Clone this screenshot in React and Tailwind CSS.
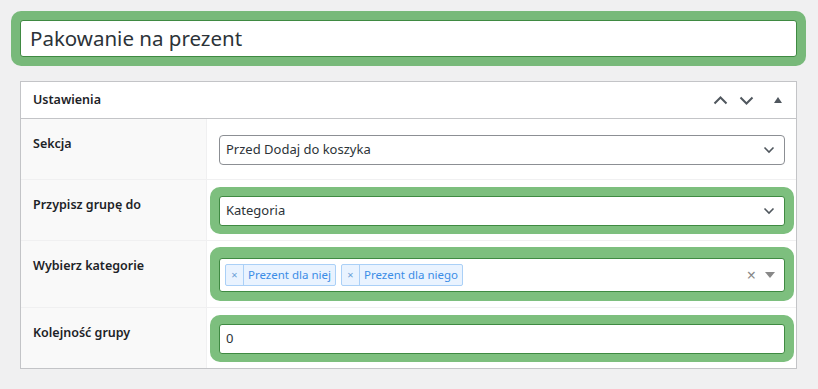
import React from "react";

const font = { fontFamily: '"Noto Sans", "Open Sans", sans-serif' };

function Chevron({ className = "" }) {
  return (
    <svg width="12" height="8" viewBox="0 0 12 8" className={className}>
      <path d="M1.5 1.5 L6 6 L10.5 1.5" fill="none" stroke="#50575e" strokeWidth="1.6" />
    </svg>
  );
}

function Row({ label, children, last, tall }) {
  return (
    <div className={`flex ${last ? "" : "border-b border-[#f0f0f1]"}`}>
      <div className="w-[186px] shrink-0 bg-[#f9f9f9] border-r border-[#f0f0f1] pl-[12px] pt-[15px] text-[12.5px] font-semibold text-[#1d2327] leading-[20px]">
        {label}
      </div>
      <div className={`flex-1 pl-[3px] pr-[2px] ${tall ? "pt-[6px] pb-[6px]" : "pt-[7px] pb-[6px]"}`}>
        {children}
      </div>
    </div>
  );
}

function Green({ children, plain, tall }) {
  return (
    <div
      className={`rounded-[10px] px-[9px] ${tall ? "pt-[11px] pb-[9px]" : "pt-[9px] pb-[8px]"} ${plain ? "" : "bg-[#7dbf7e]"}`}
    >
      {children}
    </div>
  );
}

function Tag({ text }) {
  return (
    <div className="flex h-[22px] items-stretch rounded-[2px] border border-[#aad0f7] bg-[#e9f3ff] text-[11.5px] text-[#3b8de6]">
      <span className="flex w-[18px] items-center justify-center border-r border-[#aad0f7] text-[11px] text-[#6a9fd6]">×</span>
      <span className="flex items-center px-[4px]">{text}</span>
    </div>
  );
}

export default function App() {
  return (
    <div className="w-[818px] h-[389px] bg-[#f0f0f1] overflow-hidden" style={font}>
      <div className="pt-[11px] pl-[11px] pr-[12px]">
        <div className="rounded-[10px] bg-[#78b97a] p-[9px]">
          <div className="flex h-[37px] items-center rounded-[3px] border border-[#3f8a42] bg-white pl-[9px] text-[20.5px] text-[#2c3338]">
            Pakowanie na prezent
          </div>
        </div>
      </div>
      <div className="ml-[20px] mt-[15px] w-[777px] border border-[#c3c4c7] bg-white">
        <div className="flex h-[37px] items-center border-b border-[#c3c4c7] pl-[12px] pr-[14px]">
          <span className="flex-1 text-[12.5px] font-semibold text-[#1d2327]">Ustawienia</span>
          <svg width="15" height="9" viewBox="0 0 15 9" className="mr-[11px]">
            <path d="M1.5 7.5 L7.5 1.5 L13.5 7.5" fill="none" stroke="#50575e" strokeWidth="2" />
          </svg>
          <svg width="15" height="9" viewBox="0 0 15 9" className="mr-[20px]">
            <path d="M1.5 1.5 L7.5 7.5 L13.5 1.5" fill="none" stroke="#50575e" strokeWidth="2" />
          </svg>
          <svg width="8" height="6" viewBox="0 0 8 6">
            <path d="M0 6 L4 0 L8 6 Z" fill="#50575e" />
          </svg>
        </div>

        <Row label="Sekcja">
          <Green plain>
            <div className="flex h-[30px] items-center justify-between rounded-[4px] border border-[#8c8f94] bg-white pl-[6px] pr-[9px] text-[13px] text-[#2c3338]">
              <span>Przed Dodaj do koszyka</span>
              <Chevron />
            </div>
          </Green>
        </Row>

        <Row label="Przypisz grupę do">
          <Green>
            <div className="flex h-[30px] items-center justify-between rounded-[3px] border border-[#3f8a42] bg-white pl-[6px] pr-[9px] text-[13px] text-[#2c3338]">
              <span>Kategoria</span>
              <Chevron />
            </div>
          </Green>
        </Row>

        <Row label="Wybierz kategorie" tall>
          <Green tall>
            <div className="flex h-[34px] items-center rounded-[3px] border border-[#3f8a42] bg-white pl-[5px] pr-[9px]">
              <div className="flex flex-1 gap-[5px]">
                <Tag text="Prezent dla niej" />
                <Tag text="Prezent dla niego" />
              </div>
              <span className="mr-[9px] text-[16px] leading-none text-[#888]">×</span>
              <svg width="10" height="6" viewBox="0 0 10 6">
                <path d="M0 0 L10 0 L5 6 Z" fill="#888" />
              </svg>
            </div>
          </Green>
        </Row>

        <Row label="Kolejność grupy" last>
          <Green>
            <div className="flex h-[30px] items-center rounded-[3px] border border-[#3f8a42] bg-white pl-[6px] text-[13px] text-[#2c3338]">
              0
            </div>
          </Green>
        </Row>
      </div>
    </div>
  );
}
